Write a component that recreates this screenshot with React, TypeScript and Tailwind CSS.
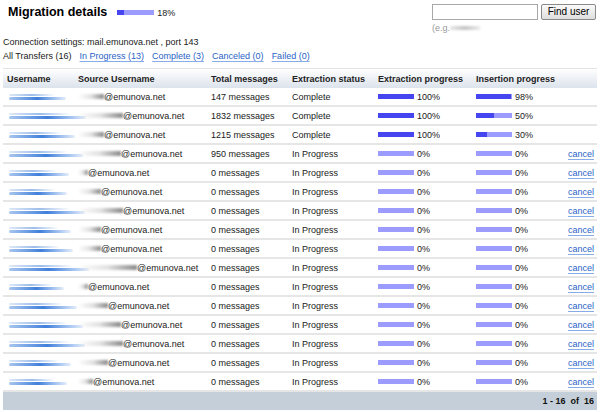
import React from "react";

type Row = {
  u: number;
  sw: number;
  msgs: number;
  status: string;
  ext: number;
  ins: number;
};

const rows: Row[] = [
  { u: 57, sw: 26, msgs: 147, status: "Complete", ext: 100, ins: 98 },
  { u: 77, sw: 45, msgs: 1832, status: "Complete", ext: 100, ins: 50 },
  { u: 66, sw: 26, msgs: 1215, status: "Complete", ext: 100, ins: 30 },
  { u: 74, sw: 43, msgs: 950, status: "In Progress", ext: 0, ins: 0 },
  { u: 60, sw: 10, msgs: 0, status: "In Progress", ext: 0, ins: 0 },
  { u: 58, sw: 23, msgs: 0, status: "In Progress", ext: 0, ins: 0 },
  { u: 76, sw: 45, msgs: 0, status: "In Progress", ext: 0, ins: 0 },
  { u: 62, sw: 23, msgs: 0, status: "In Progress", ext: 0, ins: 0 },
  { u: 64, sw: 23, msgs: 0, status: "In Progress", ext: 0, ins: 0 },
  { u: 80, sw: 59, msgs: 0, status: "In Progress", ext: 0, ins: 0 },
  { u: 55, sw: 10, msgs: 0, status: "In Progress", ext: 0, ins: 0 },
  { u: 68, sw: 30, msgs: 0, status: "In Progress", ext: 0, ins: 0 },
  { u: 74, sw: 43, msgs: 0, status: "In Progress", ext: 0, ins: 0 },
  { u: 76, sw: 45, msgs: 0, status: "In Progress", ext: 0, ins: 0 },
  { u: 62, sw: 30, msgs: 0, status: "In Progress", ext: 0, ins: 0 },
  { u: 58, sw: 15, msgs: 0, status: "In Progress", ext: 0, ins: 0 },
];

const cols = "grid grid-cols-[71px_133px_81px_86px_98px_92px_1fr] items-center pl-[4px] pr-[3px]";

function Bar({ pct, w = 36 }: { pct: number; w?: number }) {
  return (
    <div className="h-[5px] bg-[#9c9cff] shrink-0" style={{ width: w }}>
      <div className="h-full bg-[#4646f0]" style={{ width: `${pct}%` }} />
    </div>
  );
}

function Progress({ pct }: { pct: number }) {
  return (
    <div className="flex items-center gap-[3px]">
      <Bar pct={pct} />
      <span>{pct}%</span>
    </div>
  );
}

// blurred-out mailbox names, as in the original capture
function UserBlur({ w }: { w: number }) {
  return (
    <div className="flex flex-col gap-[1px] pl-[2px]">
      <div
        className="h-[2px] rounded-full bg-linear-to-r from-[#dfe9f8] via-[#9dbdea] to-transparent blur-[0.6px]"
        style={{ width: w * 0.8 }}
      />
      <div
        className="h-[3px] rounded-full bg-linear-to-r from-[#a9c6ee] via-[#3f7fdb] to-[#e6eefa] blur-[0.6px]"
        style={{ width: w }}
      />
    </div>
  );
}

function Source({ sw }: { sw: number }) {
  return (
    <div className="flex items-center">
      <div
        className="h-[5px] bg-linear-to-r from-transparent via-[#e2e2e2] to-[#8c8c8c] blur-[0.8px] shrink-0"
        style={{ width: sw }}
      />
      <span>@emunova.net</span>
    </div>
  );
}

export default function App() {
  return (
    <div className="w-[600px] h-[412px] overflow-hidden bg-white text-[9px] leading-[14px] text-[#1a1a1a] font-['Liberation_Sans',Arial,sans-serif]">
      <div className="flex justify-between h-[35px]">
        <div className="flex items-center gap-[10px] pl-[8px] h-[24px] pt-[1px]">
          <h1 className="text-[12.5px] font-bold leading-none text-black">Migration details</h1>
          <div className="flex items-center gap-[3px]">
            <Bar pct={18} w={37} />
            <span>18%</span>
          </div>
        </div>
        <div className="flex flex-col pt-[4px] pr-[4px]">
          <div className="flex gap-[3px]">
            <input className="w-[106px] h-[16px] border border-[#a8a8a8] bg-white outline-none" />
            <button className="w-[55px] h-[16px] border border-[#8a8a8a] bg-linear-to-b from-[#fafafa] to-[#dedede] text-[10px] leading-none text-black rounded-[2px]">
              Find user
            </button>
          </div>
          <div className="flex items-center text-[#9a9a9a] pt-[1px]">
            <span>(e.g.</span>
            <div className="h-[4px] w-[30px] bg-linear-to-r from-[#e8e8e8] via-[#c4c4c4] to-[#ececec] blur-[1px]" />
          </div>
        </div>
      </div>
      <div className="pl-[3px]">Connection settings: mail.emunova.net , port 143</div>
      <div className="flex gap-[8px] pl-[3px]">
        <span>All Transfers (16)</span>
        {["In Progress (13)", "Complete (3)", "Canceled (0)", "Failed (0)"].map((t) => (
          <a key={t} href="#" className="text-[#2a62c6] underline decoration-[#86acea] underline-offset-2">
            {t}
          </a>
        ))}
      </div>
      <div className="mx-[3px] mt-[5px]">
        <div className={`${cols} h-[20px] border-t border-[#e4e4e4] bg-linear-to-b from-white to-[#dce3ec] font-bold text-[#222]`}>
          <span>Username</span>
          <span>Source Username</span>
          <span>Total messages</span>
          <span>Extraction status</span>
          <span>Extraction progress</span>
          <span>Insertion progress</span>
          <span />
        </div>
        {rows.map((r, i) => (
          <div key={i} className={`${cols} h-[19px] border-b-2 border-[#e6e6e6]`}>
            <UserBlur w={r.u} />
            <Source sw={r.sw} />
            <span>{r.msgs} messages</span>
            <span>{r.status}</span>
            <Progress pct={r.ext} />
            <Progress pct={r.ins} />
            <span className="text-right">
              {r.status === "In Progress" && (
                <a href="#" className="text-[#2a62c6] underline decoration-[#86acea] underline-offset-2">
                  cancel
                </a>
              )}
            </span>
          </div>
        ))}
        <div className="flex justify-end items-center gap-[5px] h-[18px] bg-[#c5cfd9] pr-[3px] font-bold text-[#111]">
          <span>1 - 16</span>
          <span>of</span>
          <span>16</span>
        </div>
      </div>
    </div>
  );
}
